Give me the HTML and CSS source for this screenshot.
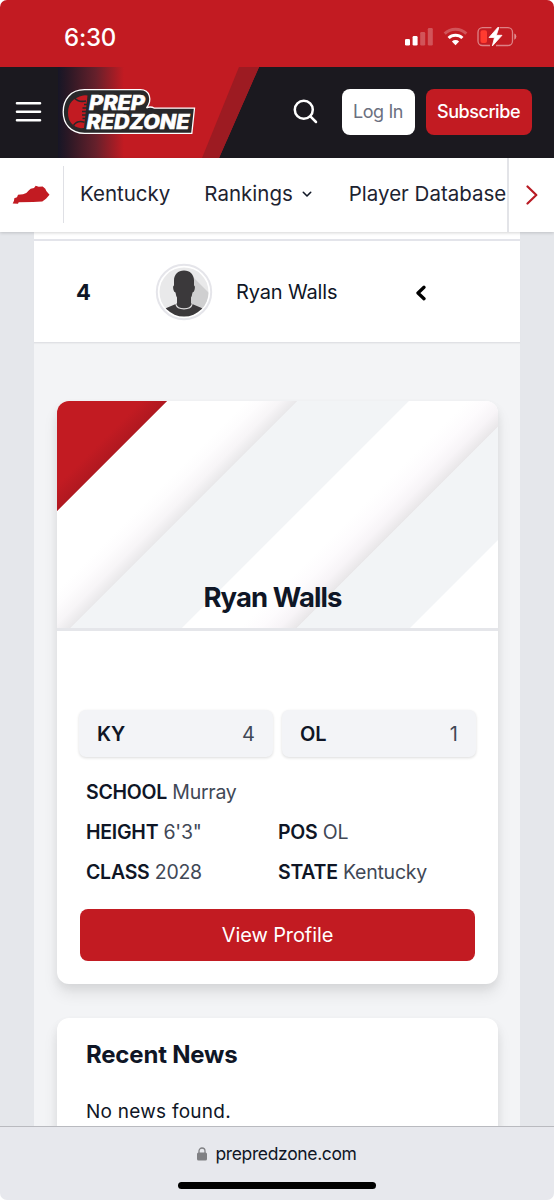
FILE: index.html
```
<!DOCTYPE html>
<html lang="en">
<head>
<meta charset="utf-8">
<title>Prep Redzone</title>
<link rel="stylesheet" href="styles.css">
</head>
<body>
<div class="phone">
  <div class="status">
    <span class="time">6:30</span>
    <svg class="status-icons" width="112" height="22" viewBox="0 0 112 22">
      <g fill="#fff">
        <rect x="0" y="12" width="5" height="6.5" rx="1.3"/>
        <rect x="7.6" y="9" width="5" height="9.500" rx="1.3"/>
        <rect x="15.2" y="5" width="5" height="13.500" rx="1.3" opacity=".25"/>
        <rect x="22.800" y="1" width="5" height="17.500" rx="1.3" opacity=".25"/>
      </g>
      <g fill="none" stroke="#fff" stroke-width="3">
        <path d="M39.700 6.700A15.500 15.500 0 0 1 61.300 6.700" opacity=".25"/>
        <path d="M43.600 11A9.800 9.800 0 0 1 57.400 11"/>
      </g>
      <path d="M50.500 18.200L46.900 14.600A5.100 5.100 0 0 1 54.100 14.600Z" fill="#fff"/>
      <path d="M86.500.700H77.500A4.500 4.500 0 0 0 73 5.200V14A4.500 4.500 0 0 0 77.500 18.500H85M95 .700H103A4.500 4.500 0 0 1 107.500 5.200V14A4.500 4.500 0 0 1 103 18.500H91" fill="none" stroke="#fff" stroke-opacity=".45" stroke-width="1.300"/>
      <path d="M109.300 6.500Q111.300 7.200 111.300 9.600T109.300 12.700Z" fill="#fff" opacity=".5"/>
      <rect x="75.500" y="3.200" width="6.500" height="12.800" rx="2" fill="#ff3b30"/>
      <path d="M93 .2L84 10.500H89.500L87.300 19L97 8.300H91.300L94 .2Z" fill="#fff" stroke="#fff" stroke-width=".8" stroke-linejoin="round"/>
    </svg>
  </div>

  <header class="header">
    <svg class="burger" width="27" height="22" viewBox="0 0 27 22"><path d="M2 2.200H25M2 10.700H25M2 19.200H25" stroke="#fff" stroke-width="2.600" stroke-linecap="round"/></svg>
    <svg class="logo" width="135" height="48" viewBox="0 0 135 48">
      <path d="M22.500 1.700H78.500C88 1.700 90.500 12.200 84.500 19.900Q88.500 18 92.500 20.200H132.500L129.800 45.400H22.500C8.500 45.400 1.200 35.700 1.200 23.700S8.500 1.700 22.500 1.700Z" fill="#29282a" stroke="#fff" stroke-width="1.300"/>
      <path d="M21 7.500Q6 11 6 24.500T19 40.200L22 40L25.500 7.500Q23 7 21 7.500Z" fill="#c21b22"/>
      <path d="M12.500 10Q16 14.500 24 13M11.500 37.500Q15 32 22.500 34.200" fill="none" stroke="#29282a" stroke-width="1.500"/>
      <path d="M22 16.500H25.500M20.500 20H25M20 23.500H25M20 27H24.500M20.500 30.500H24.500" fill="none" stroke="#29282a" stroke-width="1.300"/>
      <g class="logo-text">
        <text x="27" y="21.800" textLength="56" lengthAdjust="spacingAndGlyphs">PREP</text>
        <text x="24.500" y="41" textLength="103" lengthAdjust="spacingAndGlyphs">REDZONE</text>
      </g>
    </svg>
    <svg class="search" width="25" height="25" viewBox="0 0 25 25"><g fill="none" stroke="#fff" stroke-width="2.500" stroke-linecap="round"><circle cx="10.800" cy="10.800" r="9"/><path d="M17.400 17.400L23 23"/></g></svg>
    <a class="btn login"><span>Log In</span></a>
    <a class="btn subscribe"><span>Subscribe</span></a>
  </header>

  <nav class="nav">
    <div class="state"><svg width="38" height="20" viewBox="0 0 38 20"><path d="M.700 18.500L2 15.700L2.300 13.300L5 12.300L6 9.800L11 9.300L14.300 8L16.700 5.500L18.700 3.700L22 3L23.700.700L26.700 1.700L30.700 1.500L33.300 3.700L34.300 6L37.500 9.700L34 13.700L30.300 16.500L21 17L6.700 17.300L6 18.800Z" fill="#c21b22"/></svg></div>
    <div class="links">
      <a class="kentucky">Kentucky</a>
      <a class="rankings">Rankings</a>
      <svg class="caret" width="10" height="7" viewBox="0 0 10 7"><path d="M1.300 1.300L5 5L8.700 1.300" fill="none" stroke="#111827" stroke-width="1.600" stroke-linecap="round" stroke-linejoin="round"/></svg>
      <a class="database">Player Database</a>
    </div>
    <div class="more"><svg width="12" height="20" viewBox="0 0 12 20"><path d="M1.500 1.500L10.300 10L1.500 18.500" fill="none" stroke="#b91c25" stroke-width="2.200" stroke-linecap="round" stroke-linejoin="round"/></svg></div>
  </nav>

  <main class="page">
    <div class="column">
      <div class="previous-row"></div>
      <div class="row">
        <span class="rank">4</span>
        <svg class="avatar" width="58" height="58" viewBox="0 0 58 58">
          <defs><clipPath id="face"><circle cx="29" cy="29" r="24.500"/></clipPath></defs>
          <circle cx="29" cy="29" r="27.200" fill="#fff" stroke="#e5e5ea" stroke-width="2"/>
          <g clip-path="url(#face)">
            <rect width="58" height="58" fill="#e9e9ea"/>
            <path d="M38 14L58 34V58H42L34 36Z" fill="#cfcfd0"/>
            <path d="M29 7.500C35 7.500 39 11.500 39 17.500V22.500Q40.500 23 39.500 27Q39 29.300 37.500 29.500Q37 33 36 34.500V40.500L49 46V58H9V46L22 40.500V34.500Q21 33 20.500 29.500Q19 29.300 18.500 27Q17.500 23 19 22.500V17.500C19 11.500 23 7.500 29 7.500Z" fill="#3b393b"/>
            <path d="M20.800 41.200C22.500 47.500 35.500 47.500 37.200 41.200" fill="none" stroke="#deddde" stroke-width="1.200"/>
          </g>
        </svg>
        <span class="name">Ryan Walls</span>
        <svg class="toggle" width="12" height="16" viewBox="0 0 12 16"><path d="M9 2.300L3 8L9 13.700" fill="none" stroke="#000" stroke-width="3.300" stroke-linecap="round" stroke-linejoin="round"/></svg>
      </div>
      <div class="details">
        <section class="card">
          <div class="banner"><h2><span>Ryan Walls</span></h2></div>
          <div class="card-body">
            <div class="ranks">
              <div class="box"><b>KY</b><span>4</span></div>
              <div class="box"><b>OL</b><span>1</span></div>
            </div>
            <div class="facts">
              <div class="wide"><b>SCHOOL</b> Murray</div>
              <div><b>HEIGHT</b> 6'3"</div><div><b>POS</b> OL</div>
              <div><b>CLASS</b> 2028</div><div><b>STATE</b> Kentucky</div>
            </div>
            <a class="profile"><span>View Profile</span></a>
          </div>
        </section>
        <section class="card news">
          <h3><span>Recent News</span></h3>
          <p><span>No news found.</span></p>
        </section>
      </div>
    </div>
  </main>

  <footer class="browser">
    <div class="address">
      <svg width="10" height="14" viewBox="0 0 10 14"><rect x="0" y="5.500" width="10" height="8" rx="1.500" fill="#808084"/><path d="M2 6V4A3 3 0 0 1 8 4V6" fill="none" stroke="#808084" stroke-width="1.300"/></svg>
      <span>prepredzone.com</span>
    </div>
    <div class="home"></div>
  </footer>
</div>
</body>
</html>
```

FILE: styles.css
```
* { box-sizing: border-box; }
html, body { margin: 0; padding: 0; background: #fff; }
body { font-family: Inter, "Liberation Sans", sans-serif; color: #0f1626; font-size: 20px; line-height: 1; }
h2, h3, p { margin: 0; }
svg { display: block; flex: none; }
.phone { width: 554px; height: 1200px; overflow: hidden; display: flex; flex-direction: column; border-radius: 7px; }

.status { flex: none; height: 67px; background: #c21b22; color: #fff; display: flex; justify-content: space-between; padding: 25px 37px 0 64px; }
.time { font-size: 24px; font-weight: 500; line-height: 25px; letter-spacing: -0.2px; }
.status-icons { margin-top: 2px; }

.header { flex: none; height: 91px; display: flex; align-items: center; padding: 0 23px 1px 15px; color: #fff; background: #1b191f; position: relative; z-index: 0; }
.header::before { content: ""; position: absolute; z-index: -1; left: 58px; top: 0; width: 201px; height: 91px;
  background: linear-gradient(90deg, #171626 0, #2a1825 10px, #66202b 38px, #c21b22 66px);
  clip-path: polygon(0 0, 100% 0, 161px 100%, 0 100%); }
.header::after { content: ""; position: absolute; z-index: -1; left: 202px; top: 0; width: 57px; height: 91px;
  background: #9d1b22; clip-path: polygon(37px 0, 100% 0, 17px 100%, 0 100%); }
.logo { margin-left: 20px; }
.logo-text { font-family: Inter, sans-serif; font-weight: 800; font-style: italic; font-size: 20px; fill: #fff; stroke: #fff; stroke-width: .6px; }
.search { margin-left: 96px; margin-top: -2px; }
.btn { height: 46px; border-radius: 8px; display: flex; align-items: center; justify-content: center; font-size: 18px; flex: none; }
.login { margin-left: 23px; width: 73px; background: #fff; color: #6b7080; letter-spacing: -.4px; }
.subscribe { margin-left: 11px; width: 106px; background: #c21b22; font-weight: 500; letter-spacing: -.45px; }
.login, .subscribe { position: relative; right: -.5px; }

.nav { flex: none; height: 74px; background: #fff; display: flex; position: relative; z-index: 2; box-shadow: 0 1px 3px rgba(0,0,0,.17); }
.state { width: 64px; height: 57px; margin-top: 8px; padding: 19px 0 0 12px; border-right: 1px solid #dfe0e5; flex: none; }
.links { flex: 1; min-width: 0; display: flex; overflow: hidden; padding: 23px 0 0 16px; line-height: 26px; color: #1d2331; white-space: nowrap; font-size: 20.500px; }
.rankings { margin-left: 34px; }
.caret { margin: 10px 0 0 9px; }
.database { margin-left: 37px; }
.more { flex: none; width: 47px; border-left: 2px solid #e3e4e8; padding: 27px 0 0 17px; }

.page { flex: 1; min-height: 0; overflow: hidden; background: #e5e7eb; padding: 0 34px; }
.column { background: #f3f4f6; height: 100%; }
.previous-row { height: 9px; background: #fff; border-bottom: 2px solid #e3e4ea; }
.row { height: 102px; background: #fff; border-bottom: 1px solid #e0e1e5; display: flex; align-items: center; padding-left: 42px; box-shadow: 0 1px 1px rgba(0,0,0,.03); }
.rank { font-size: 22px; font-weight: 700; width: 79px; }
.avatar { margin-top: 0; }
.name { margin-left: 23px; width: 102px; white-space: nowrap; font-size: 20px; letter-spacing: -.15px; }
.toggle { margin: 3px 0 0 77px; }

.details { padding: 58px 23px 0; display: grid; gap: 34px; }
.card { background: #fff; border-radius: 12px; box-shadow: 0 10px 15px rgba(0,0,0,.08), 0 4px 9px rgba(0,0,0,.06); height: 583px; }
.banner { height: 230px; border-radius: 12px 12px 0 0; border-bottom: 3px solid #e5e6ea; display: flex; justify-content: center; padding-top: 181px; padding-right: 10px;
  background: linear-gradient(135deg, #c21b22 0, #c21b22 60px, #b01820 77.500px, #fff 78.300px, #fff 134px, #fdfcfd 145px, #f7f5f7 158px, #e9e8ea 169.500px, #f2f4f6 170.300px, #f2f4f6 248.500px, #fff 249.200px, #fff 290px, #fdfbfd 305px, #f7f4f7 318px, #e9e7e9 329.500px, #f2f4f6 330.300px, #f2f4f6 409.800px, #fff 410.500px); }
.banner h2 { font-size: 27.500px; line-height: 30px; font-weight: 700; letter-spacing: -.9px; white-space: nowrap; }
.card-body { padding: 79px 22px 0; }
.ranks { display: grid; grid-template-columns: 194px 194px; gap: 9px; }
.box { height: 47px; background: #f3f4f7; border-radius: 7px; box-shadow: 0 1px 3px rgba(0,0,0,.14); display: flex; justify-content: space-between; align-items: center; padding: 0 18px; }
.box b { font-weight: 600; }
.box span { color: #414856; }
.facts { display: grid; grid-template-columns: 192px 1fr; grid-auto-rows: 40px; align-items: center; padding: 16px 0 0 7px; color: #414856; white-space: nowrap; font-size: 19.500px; letter-spacing: -.25px; }
.wide { grid-column: 1 / 3; }
.facts b { font-weight: 600; color: #0f1626; }
.profile { display: flex; height: 52px; margin: 16px 1px 0; background: #c21b22; color: #fff; border-radius: 8px; align-items: center; justify-content: center; letter-spacing: -.1px; }
.news { padding: 23px 29px; }
.news h3 { font-size: 24px; line-height: 28px; font-weight: 700; letter-spacing: -.2px; }
.news p { margin-top: 31px; line-height: 24px; font-size: 19px; letter-spacing: .25px; }

.browser { flex: none; height: 74px; background: #e7e8ed; border-top: 1px solid #b9babf; position: relative; z-index: 3; }
.address { display: flex; justify-content: center; align-items: center; gap: 8px; height: 54px; font-size: 17.500px; letter-spacing: -.35px; }
.home { width: 198px; height: 7px; border-radius: 4px; background: #000; margin: 1px auto 0; }
```
